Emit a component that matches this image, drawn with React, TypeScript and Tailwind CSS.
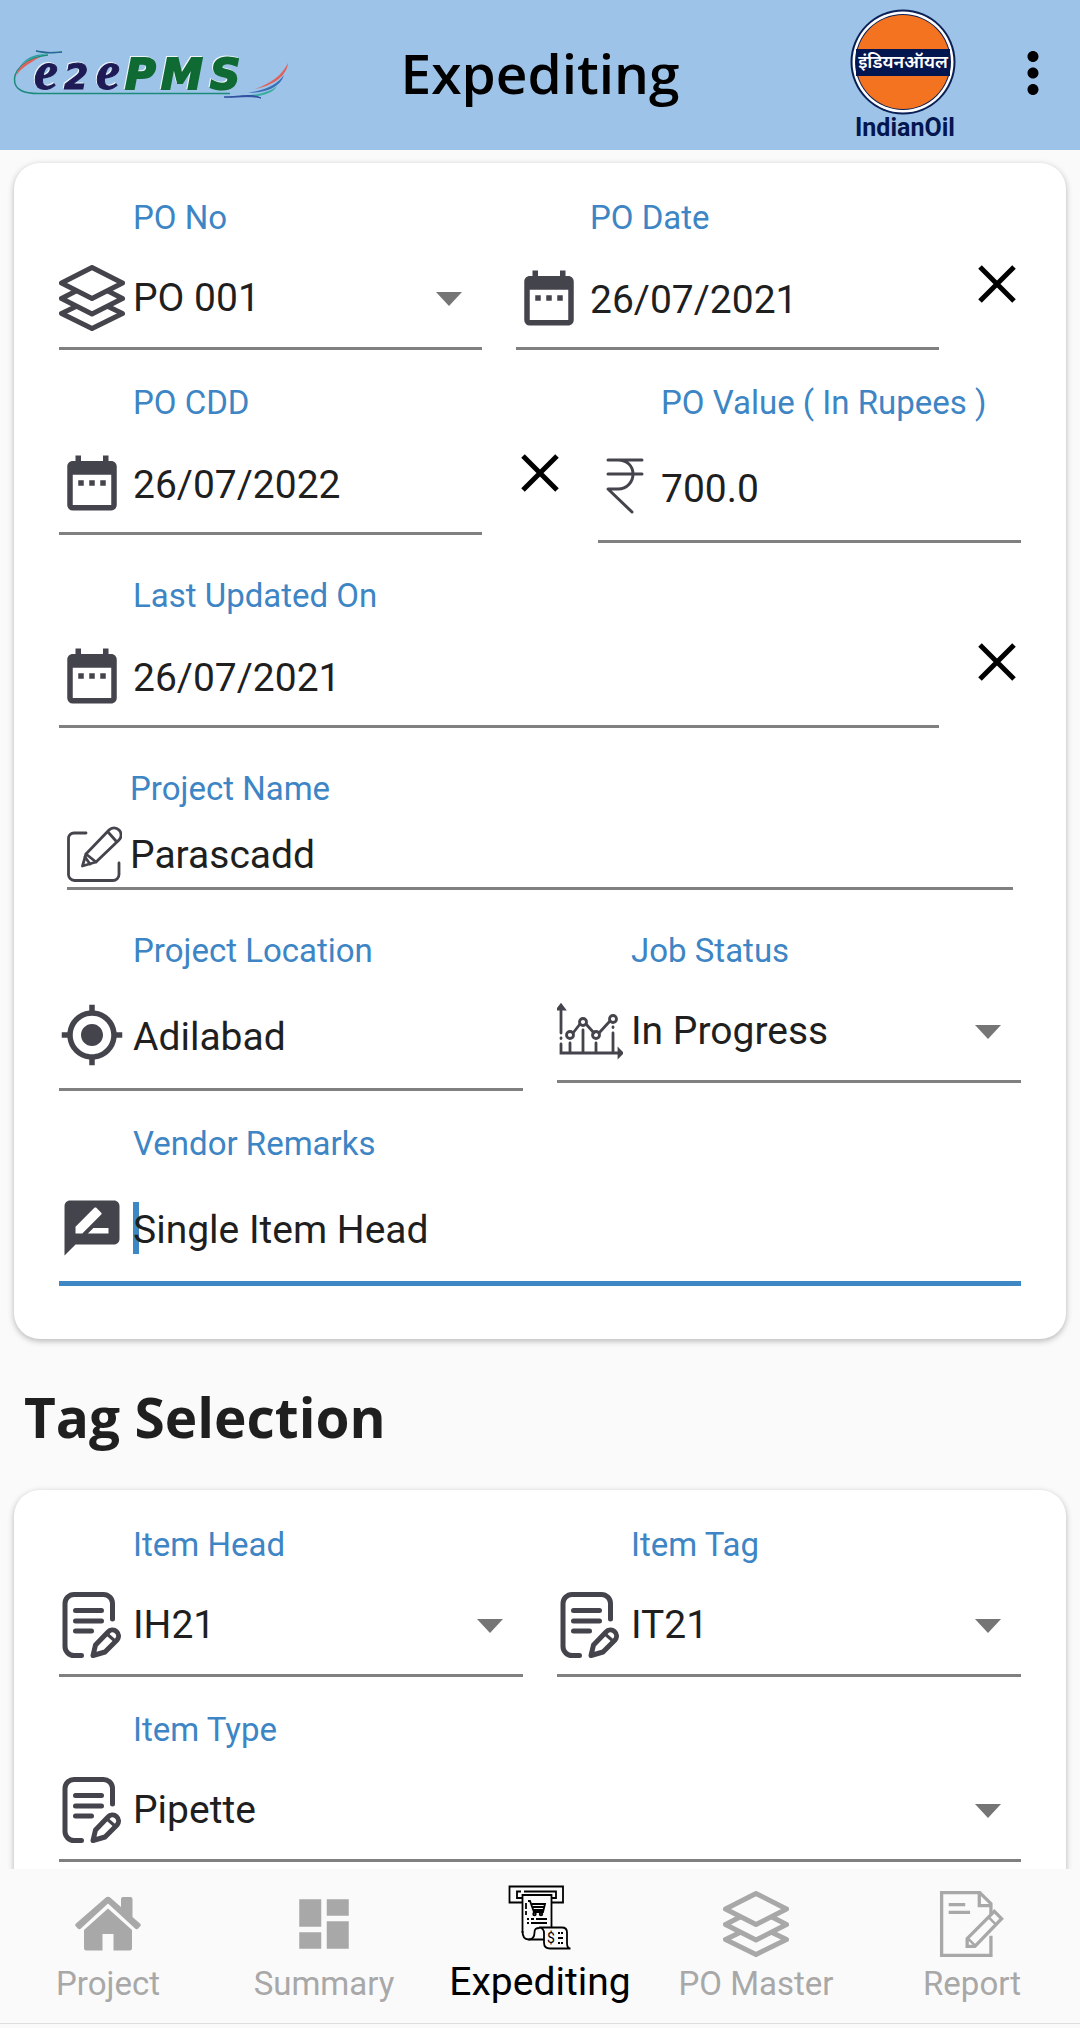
import React, { useState } from 'react';
import { MdDashboard, MdDateRange, MdGpsFixed, MdMoreVert, MdRateReview } from 'react-icons/md';

interface IconProps {
  size?: number;
  className?: string;
}

interface FieldProps {
  id: string;
  label: string;
  icon: React.ReactNode;
  defaultValue: string;
  slim?: boolean;
  focused?: boolean;
  tall?: boolean;
}

function LayersIcon({ size = 66, className }: IconProps) {
  return (
    <svg width={size} height={size} viewBox="0 0 66 66" fill="none" stroke="currentColor" strokeWidth="5" strokeLinejoin="round" className={className}>
      <path d="M33 2.5 63.5 18 33 33.5 2.5 18Z" />
      <path d="M18 25.5 2.5 33.5 33 49 63.5 33.5 48 25.5" />
      <path d="M18 41 2.5 48.5 33 63.5 63.5 48.5 48 41" />
    </svg>
  );
}

function RupeeIcon() {
  return (
    <svg width="55" height="66" viewBox="0 0 55 66" fill="none" stroke="currentColor" strokeWidth="3" strokeLinecap="round" strokeLinejoin="round">
      <path d="M10 6h34M10 20h34M20 6c9 0 15 6 15 14s-6 15-15 15H10l24 23" />
    </svg>
  );
}

function EditIcon() {
  return (
    <svg width="55" height="56" viewBox="0 0 55 56" fill="none" stroke="currentColor" strokeWidth="2.8" strokeLinecap="round" strokeLinejoin="round">
      <path d="M19 7H7a5.5 5.5 0 0 0-5.5 5.5V48A6 6 0 0 0 7.5 54.5H46a6 6 0 0 0 6-6V37" />
      <path d="M15.5 40 19 28 42 4a7 7 0 0 1 10 0 7 7 0 0 1 0 10L29 36Z" />
      <path d="M19 28 29 36M41 6l8 9M18 31l5 7" />
    </svg>
  );
}

function ChartIcon() {
  return (
    <svg width="66" height="66" viewBox="0 0 66 66" fill="none" stroke="currentColor" strokeWidth="2.8" strokeLinecap="round">
      <path d="M4 10v25M4 40v.5M4 46v9h60M13 45v10M26 32v23M39 45v10M56 35v20M56 29v.5" />
      <path d="M1 11 4 7l3 4ZM62 52l3 3-3 3Z" fill="currentColor" />
      <path d="m16 35 7-9M29 26l8 9M42 35l11-12" />
      <circle cx="13" cy="37" r="3.5" />
      <circle cx="26" cy="24" r="3.5" />
      <circle cx="39" cy="37" r="3.5" />
      <circle cx="56" cy="21" r="3.5" />
    </svg>
  );
}

function NoteIcon() {
  return (
    <svg width="66" height="66" viewBox="0 0 66 66" fill="none" stroke="currentColor" strokeWidth="5" strokeLinecap="round" strokeLinejoin="round">
      <path d="M22.5 63.5H15A9 9 0 0 1 6 54.5V11.5A9 9 0 0 1 15 2.5H44.5A9 9 0 0 1 53.5 11.5V27" />
      <path d="M16.5 18.5h26M16.5 29h26M16.5 39h16" />
      <path d="M34 63.5 36.5 53 49 40a6 6 0 0 1 9 8L46 60Z" />
      <path d="m48 42 8 7" strokeWidth="3" />
    </svg>
  );
}

function CloseIcon() {
  return (
    <svg width="38" height="38" viewBox="0 0 38 38" fill="none" stroke="currentColor" strokeWidth="5">
      <path d="m2 2 34 34M36 2 2 36" />
    </svg>
  );
}

function HomeIcon() {
  return (
    <svg width="66" height="66" viewBox="0 0 66 66" fill="currentColor">
      <path d="M30 7.2a4.5 4.5 0 0 1 6 0l10 8.8V8a2 2 0 0 1 2-2h7.5a2 2 0 0 1 2 2v18l7.5 6.5a2 2 0 0 1 .2 2.8l-2 2.2a2 2 0 0 1-2.8.2L33 12.5 5.6 37.7a2 2 0 0 1-2.8-.2l-2-2.2a2 2 0 0 1 .2-2.8Z" />
      <path d="M33 17.5 57 39v18a2.5 2.5 0 0 1-2.5 2.5H38.5V43h-11v16.5H11.5A2.5 2.5 0 0 1 9 57V39Z" />
    </svg>
  );
}

function ExpeditingIcon() {
  return (
    <svg width="66" height="66" viewBox="0 0 66 66" fill="none" stroke="currentColor" strokeWidth="1.8">
      <path d="M15 17.5H2.5V1.5H56V17.5H45" />
      <path d="M15 13H10V6.5H14M17 6.5H49V13H45" />
      <path d="M15.5 48V10H44.5V42" />
      <path d="M15.5 46c0 6 2 8.5 6 8.5s6-3 6-7 2-4.500 5-4.500" />
      <path d="M21.5 54.5H37M32 42.5H55c3.5 0 5 2 5 5V58c0 3 1 5.5 3.5 5.5H43c-4 0-6-2-6-6V48c0-3-2-5.5-5-5.5" />
      <path d="M19 18v6M19 26v4M21 16h2l4 11h9l2-8H25" />
      <path d="M26 22h12M27 25h10" />
      <circle cx="27.5" cy="29" r="1.3" />
      <circle cx="34" cy="29" r="1.3" />
      <path d="M20 34h2M24 34h3M29 34h11M20 38h2M24 38h16M51 48h2M54 48h2M51 53h5M51 58h2M54 58h2" />
      <text x="40" y="58" fontSize="14" fontFamily="Roboto, sans-serif" fill="currentColor" stroke="none">$</text>
    </svg>
  );
}

function ReportIcon() {
  return (
    <svg width="66" height="66" viewBox="0 0 66 68" fill="none" stroke="currentColor" strokeWidth="3.4">
      <path d="M52.5 46V66.3H1.7V1.7H41L52.5 13V24" />
      <path d="M40.5 2v13h12M9 14h17M9 22h22" />
      <path d="M28 57V49L56 21l7.5 7.5L36 57Z" />
      <path d="m29 49 7 7M50 27l8 8" strokeWidth="2.5" />
    </svg>
  );
}

function PmsLogo() {
  return (
    <svg width="288" height="80" viewBox="0 -12 288 80" fill="none" role="img" aria-label="e2ePMS">
      <path d="M62 7 46 8 36 6M48 10C30 12 15 22 14.5 34S26 48.5 38 48.5H230" stroke="#1c8a7a" strokeWidth="1.5" />
      <path d="M16 31C18 22 26 15 40 12 28 19 20 24 16 31Z" fill="#e0615c" />
      <path d="M20 21C26 13 34 9 46 9 34 12 26 15 20 21Z" fill="#2b9fa0" />
      <path d="M62 7C52 9 44 7 36 6" stroke="#2f5f9f" strokeWidth="1.2" />
      <path d="M255 44c17-6 27-14 33-26-1 12-13 22-33 26Z" fill="#e0615c" />
      <path d="M248 48c18-3 30-9 36-18-3 11-16 18-36 18Z" fill="#3a6fb5" />
      <path d="M240 51c18-1 30-4 37-10-4 8-18 12-37 10Z" fill="#3cae9f" />
      <path d="M224 52c14 0 28-4 37 1-12-3-25 0-37-1Z" fill="#2f4f9f" stroke="#2f4f9f" />
      <g fontStyle="italic" fontWeight="700" className="drop-shadow-[-1px_-1px_0_#eef6fa]">
        <g fill="#1d1a55" stroke="#1d1a55" strokeWidth="1">
          <text x="34" y="44" fontSize="54" fontFamily="'Liberation Serif', serif">e</text>
          <text x="64" y="44" fontSize="35" fontFamily="'DejaVu Sans', sans-serif">2</text>
          <text x="96" y="44" fontSize="54" fontFamily="'Liberation Serif', serif">e</text>
        </g>
        <g fill="#106a33" stroke="#106a33" strokeWidth="2" fontSize="42" fontFamily="'DejaVu Sans', sans-serif">
          <text x="125" y="44">P</text>
          <text x="161" y="44">M</text>
          <text x="210" y="44">S</text>
        </g>
      </g>
    </svg>
  );
}

function IndianOilLogo() {
  return (
    <svg width="106" height="136" viewBox="0 -2 106 136" role="img" aria-label="IndianOil">
      <circle cx="53" cy="55" r="52.5" fill="#0a1f55" />
      <circle cx="53" cy="55" r="50.5" fill="#ffffff" />
      <circle cx="53" cy="55" r="48" fill="#0a1f55" />
      <circle cx="53" cy="55" r="47" fill="#f37321" />
      <path d="M6 42h94v27H6Z" fill="#04164f" />
      <text x="53" y="61" textAnchor="middle" fontSize="18" fontWeight="600" fontFamily="'Noto Sans', 'Noto Sans Devanagari', sans-serif" fill="#ffffff">इंडियनऑयल</text>
      <text x="55" y="129" textAnchor="middle" fontSize="25" fontWeight="700" fontFamily="Roboto, sans-serif" fill="#04164f">IndianOil</text>
    </svg>
  );
}

function FieldShell({ id, label, icon, slim, focused, tall, children }: FieldProps & { children: React.ReactNode }) {
  const height = focused ? 'h-[122px]' : tall ? 'h-[120px]' : 'h-[112px]';

  return (
    <div className="min-w-0 flex-1">
      <label htmlFor={id} className={`block text-[33px] leading-[40px] whitespace-nowrap text-[#3d85c4] ${slim ? 'pl-[63px]' : 'pl-[74px]'}`}>
        {label}
      </label>
      <div
        className={`flex items-center gap-2 pt-[11px] text-[#44444c] ${height} ${
          focused ? 'border-b-[5px] border-[#3d87c4]' : 'border-b-[3px] border-[#808080]'
        }`}
      >
        <div className={`flex shrink-0 justify-center ${slim ? 'w-[55px]' : 'w-[66px]'}`}>{icon}</div>
        {children}
      </div>
    </div>
  );
}

function TextField(props: FieldProps) {
  return (
    <FieldShell {...props}>
      <div className="relative min-w-0 flex-1">
        {/* Block caret shown behind the text of the active field */}
        {props.focused && <span className="absolute inset-y-0 left-0 w-[6px] bg-[#3d87c4]"></span>}
        <input
          id={props.id}
          type="text"
          defaultValue={props.defaultValue}
          className="relative block h-[52px] w-full bg-transparent pt-1 text-[39px] text-[#1f1f1f] outline-none"
        />
      </div>
    </FieldShell>
  );
}

function SelectField(props: FieldProps) {
  return (
    <FieldShell {...props}>
      <div className="relative min-w-0 flex-1">
        <select id={props.id} defaultValue={props.defaultValue} className="block h-[52px] w-full appearance-none bg-transparent pr-14 text-[39px] leading-[50px] text-[#1f1f1f] outline-none">
          <option>{props.defaultValue}</option>
        </select>
        <svg width="26" height="14" viewBox="0 0 26 14" fill="#757575" className="pointer-events-none absolute top-5 right-5">
          <path d="M0 0h26L13 14Z" />
        </svg>
      </div>
    </FieldShell>
  );
}

function ClearButton({ label }: { label: string }) {
  return (
    <button type="button" aria-label={label} className="mt-5 flex h-12 w-12 shrink-0 items-center justify-center self-center text-black">
      <CloseIcon />
    </button>
  );
}

const tabs = [
  { name: 'Project', icon: <HomeIcon /> },
  { name: 'Summary', icon: <MdDashboard size={66} /> },
  { name: 'Expediting', icon: <ExpeditingIcon /> },
  { name: 'PO Master', icon: <LayersIcon /> },
  { name: 'Report', icon: <ReportIcon /> },
];

export default function App() {
  const [activeTab, setActiveTab] = useState('Expediting');
  const calendar = <MdDateRange size={66} />;

  return (
    <div className="flex h-screen flex-col bg-[#fafafa] font-['Roboto',sans-serif]">
      <header className="grid h-[150px] shrink-0 grid-cols-[1fr_auto_1fr] items-center bg-[#9dc3e8] pb-1">
        <PmsLogo />
        <h1 className="font-['Open_Sans',sans-serif] text-[55px] leading-[60px] font-semibold text-black">Expediting</h1>
        <div className="flex items-center justify-end gap-[44px] pr-[14px]">
          <IndianOilLogo />
          <button type="button" aria-label="More options" className="text-black">
            <MdMoreVert size={66} />
          </button>
        </div>
      </header>

      <main className="min-h-0 flex-1 overflow-y-auto px-[14px] pt-[13px] [scrollbar-width:none]">
        <section className="flex flex-col gap-[33px] rounded-[26px] bg-white px-[45px] pt-[35px] pb-[53px] shadow-[0_2px_6px_rgba(0,0,0,0.28)]">
          <div className="flex items-start gap-[34px]">
            <SelectField id="po-no" label="PO No" icon={<LayersIcon />} defaultValue="PO 001" />
            <TextField id="po-date" label="PO Date" icon={calendar} defaultValue="26/07/2021" />
            <ClearButton label="Clear PO date" />
          </div>

          <div className="flex items-start gap-[34px]">
            <TextField id="po-cdd" label="PO CDD" icon={calendar} defaultValue="26/07/2022" />
            <ClearButton label="Clear PO CDD" />
            <TextField id="po-value" label="PO Value ( In Rupees )" icon={<RupeeIcon />} defaultValue="700.0" slim tall />
          </div>

          <div className="flex items-start gap-[34px]">
            <TextField id="last-updated" label="Last Updated On" icon={calendar} defaultValue="26/07/2021" />
            <ClearButton label="Clear last updated date" />
          </div>

          {/* Project name uses the compact input with its own margin */}
          <div className="m-2">
            <label htmlFor="project-name" className="block pl-[63px] text-[33px] leading-[40px] text-[#3d85c4]">Project Name</label>
            <div className="flex h-[81px] items-center gap-2 border-b-[3px] border-[#808080] pt-[11px] text-[#44444c]">
              <EditIcon />
              <input id="project-name" type="text" defaultValue="Parascadd" className="block h-[52px] min-w-0 flex-1 bg-transparent pt-1 text-[39px] text-[#1f1f1f] outline-none" />
            </div>
          </div>

          <div className="flex items-start gap-[34px]">
            <TextField id="project-location" label="Project Location" icon={<MdGpsFixed size={66} />} defaultValue="Adilabad" tall />
            <SelectField id="job-status" label="Job Status" icon={<ChartIcon />} defaultValue="In Progress" />
          </div>

          <TextField id="vendor-remarks" label="Vendor Remarks" icon={<MdRateReview size={66} />} defaultValue="Single Item Head" focused tall />
        </section>

        <h2 className="mt-12 mb-[43px] pl-[10px] font-['Open_Sans',sans-serif] text-[55px] leading-[60px] font-bold text-[#1f1f1f]">Tag Selection</h2>

        <section className="flex flex-col gap-[33px] rounded-[26px] bg-white px-[45px] pt-[35px] pb-[53px] shadow-[0_2px_6px_rgba(0,0,0,0.28)]">
          <div className="flex items-start gap-[34px]">
            <SelectField id="item-head" label="Item Head" icon={<NoteIcon />} defaultValue="IH21" />
            <SelectField id="item-tag" label="Item Tag" icon={<NoteIcon />} defaultValue="IT21" />
          </div>
          <SelectField id="item-type" label="Item Type" icon={<NoteIcon />} defaultValue="Pipette" />
        </section>
      </main>

      <nav className="mb-1 grid h-[155px] shrink-0 grid-cols-5 border-b border-[#dddddd] bg-[#fafafa]">
        {tabs.map((tab) => {
          const active = tab.name === activeTab;
          return (
            <button
              key={tab.name}
              type="button"
              onClick={() => setActiveTab(tab.name)}
              className={`flex flex-col items-center justify-start whitespace-nowrap ${
                active ? 'gap-[11px] pt-4 text-[39px] text-black' : 'gap-[7px] pt-[22px] text-[33px] text-[#a8a8a8]'
              }`}
            >
              {tab.icon}
              <span className="leading-[40px]">{tab.name}</span>
            </button>
          );
        })}
      </nav>
    </div>
  );
}
